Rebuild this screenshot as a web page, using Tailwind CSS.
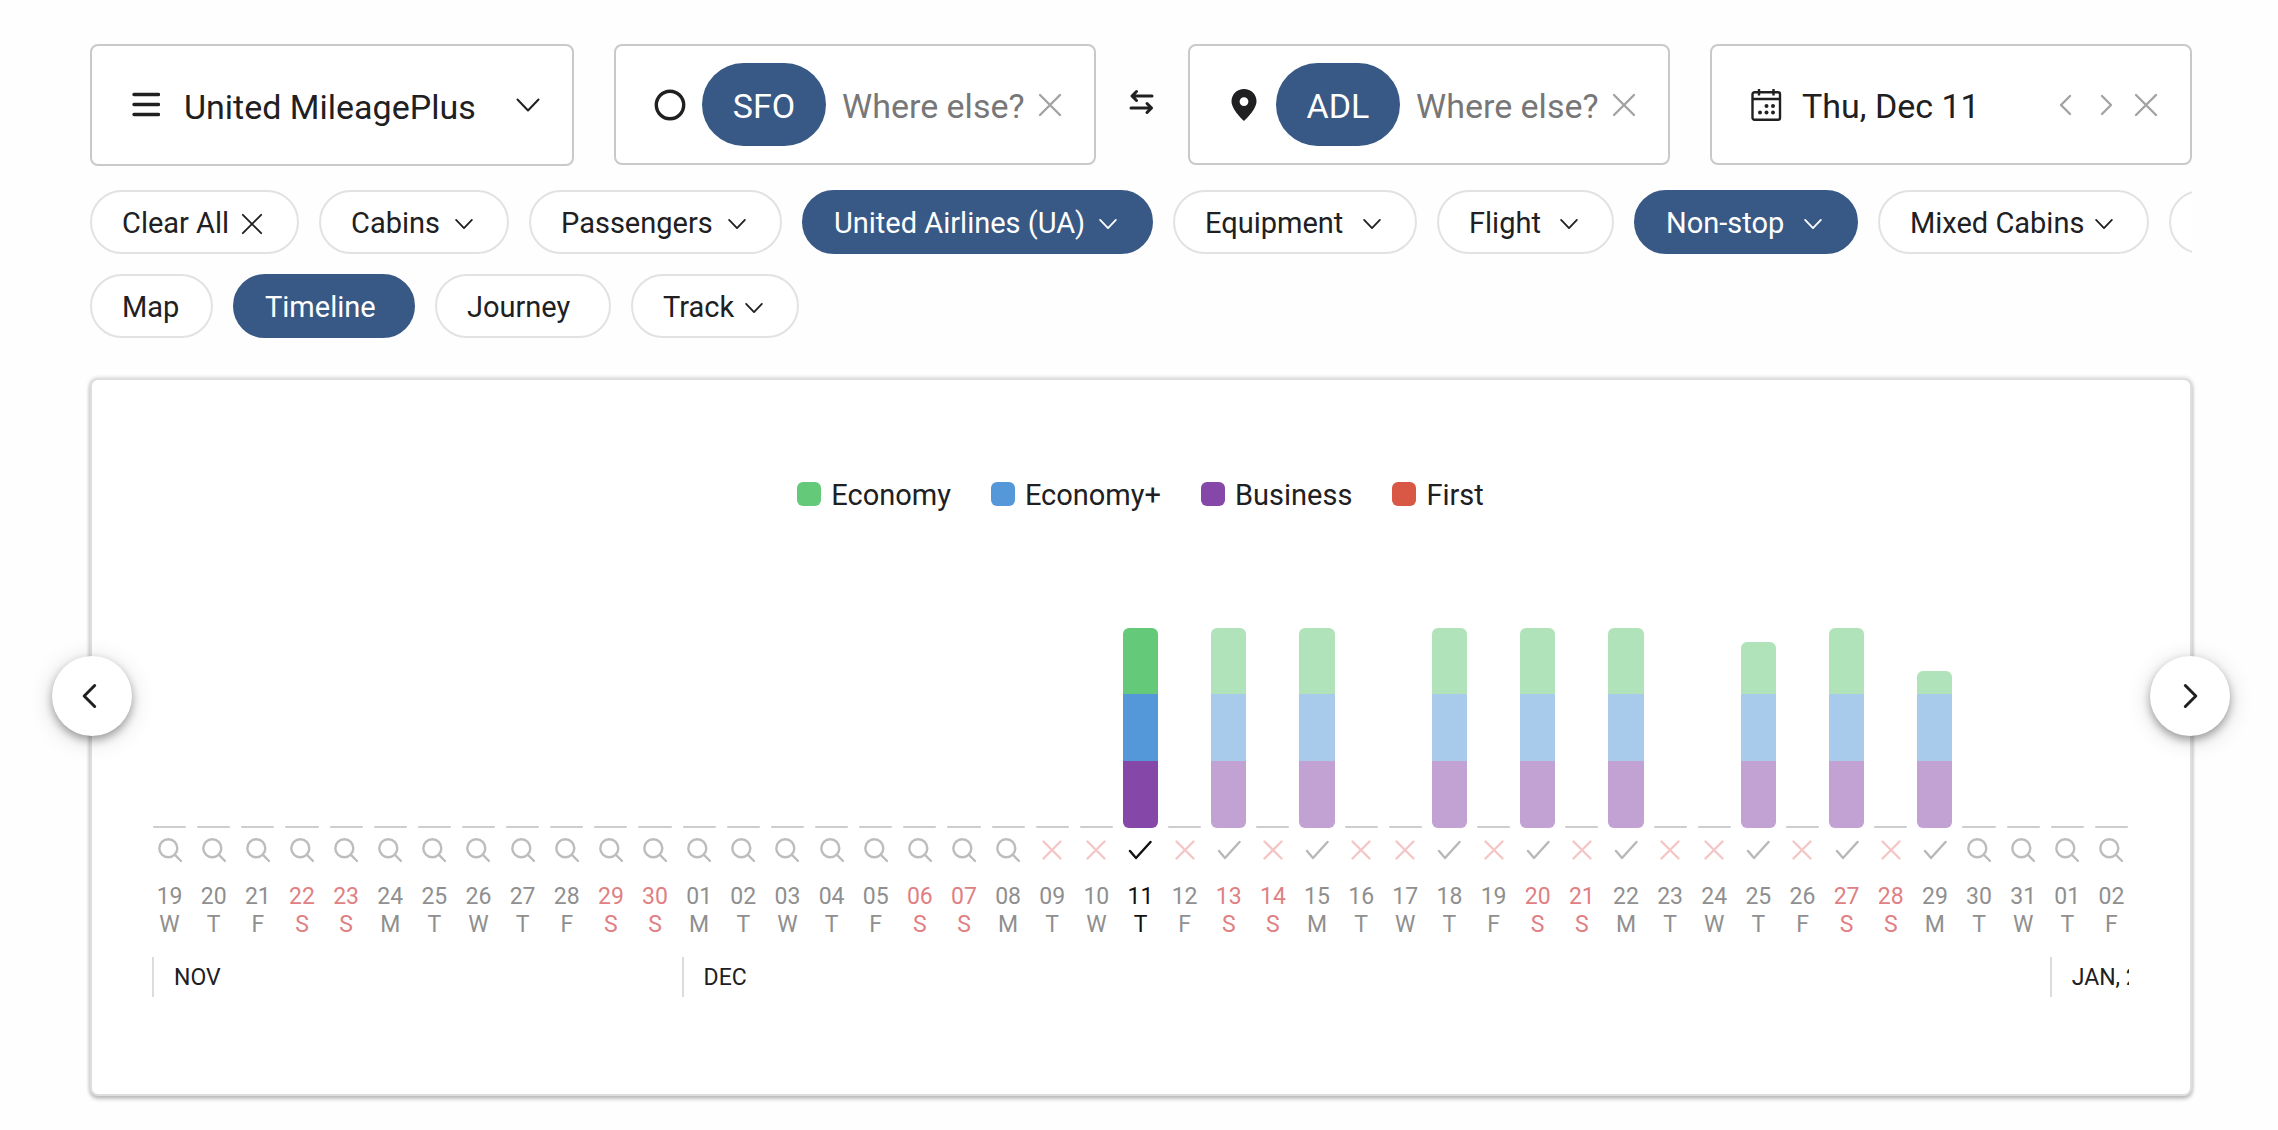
<!DOCTYPE html>
<html lang="en">
<head>
<meta charset="utf-8">
<meta name="viewport" content="width=device-width, initial-scale=1">
<title>Award timeline</title>
<script src="https://cdn.jsdelivr.net/npm/@tailwindcss/browser@4"></script>
</head>
<body class="bg-[#fefefe] font-[Roboto,sans-serif] text-[#202022]">
<svg class="hidden" aria-hidden="true" fill="none" stroke="currentColor">
  <symbol id="chevron-down" viewBox="0 0 24 24" fill="none" stroke="currentColor" stroke-linecap="round" stroke-linejoin="round"><path d="M1.500 6.500L12 17.500l10.500-11"/></symbol>
  <symbol id="chevron-left" viewBox="0 0 24 24" fill="none" stroke="currentColor" stroke-linecap="round" stroke-linejoin="round"><path d="M16 3L7 12l9 9"/></symbol>
  <symbol id="chevron-right" viewBox="0 0 24 24" fill="none" stroke="currentColor" stroke-linecap="round" stroke-linejoin="round"><path d="M8 3l9 9-9 9"/></symbol>
  <symbol id="cross" viewBox="0 0 24 24" fill="none" stroke="currentColor" stroke-linecap="round"><path d="M2 2l20 20M22 2L2 22"/></symbol>
  <symbol id="day-cross" viewBox="0 0 24 24" fill="none" stroke="currentColor" stroke-linecap="round"><path d="M3.500 3.500l17 17M20.500 3.500l-17 17"/></symbol>
  <symbol id="day-check" viewBox="0 0 24 24" fill="none" stroke="currentColor" stroke-linecap="round" stroke-linejoin="round"><path d="M2 13l6 7L22.500 4"/></symbol>
  <symbol id="day-search" viewBox="0 0 24 24" fill="none" stroke="currentColor" stroke-linecap="round"><circle cx="10.300" cy="10.300" r="9"/><path d="M16.700 16.700l6.300 6.300"/></symbol>
</svg>

<main class="flex flex-col overflow-x-clip pt-11 pr-[86px] pb-8 pl-[90px]">
  <form class="flex items-start gap-10">
    <button type="button" class="flex h-[122px] min-w-0 flex-1 items-center rounded-lg border-2 border-[#c9c9c9] bg-white pr-8 pl-10 text-left text-[34px]">
      <svg class="h-7 w-7 shrink-0" viewBox="0 0 28 28" fill="none" stroke="currentColor" stroke-width="3.400" stroke-linecap="round"><path d="M2 3.500h24.500M2 13.500h24.500M2 23.500h24.500"/></svg>
      <span class="ml-6 grow pt-1 whitespace-nowrap">United MileagePlus</span>
      <svg class="h-6 w-6 shrink-0" stroke-width="2"><use href="#chevron-down"/></svg>
    </button>

    <div class="flex h-[121px] min-w-0 flex-1 items-center rounded-lg border-2 border-[#c9c9c9] bg-white pr-8 pl-[38px] text-[34px]">
      <svg class="h-8 w-8 shrink-0" viewBox="0 0 32 32"><circle cx="16" cy="16" r="13.700" fill="none" stroke="currentColor" stroke-width="3.400"/></svg>
      <span class="ml-4 flex h-[83px] w-31 shrink-0 items-center justify-center rounded-full bg-[#385985] pt-1 text-white">SFO</span>
      <input type="text" aria-label="Origin" placeholder="Where else?" class="ml-4 min-w-0 grow bg-transparent pt-1 outline-none placeholder:text-[#777]">
      <button type="button" aria-label="Clear origin" class="shrink-0 text-[#a3a3a3]"><svg class="h-6 w-6" stroke-width="2.400"><use href="#cross"/></svg></button>
    </div>

    <button type="button" aria-label="Swap origin and destination" class="-mx-8 flex h-[115px] w-19 shrink-0 items-center justify-center">
      <svg class="h-7 w-7" viewBox="0 0 28 28" fill="none" stroke="currentColor" stroke-width="3" stroke-linecap="round" stroke-linejoin="round"><path d="M24 8H4M8.500 3.500L4 8l4.500 4.500M3 20h20.500M19 15.500l4.500 4.500-4.500 4.500"/></svg>
    </button>

    <div class="flex h-[121px] min-w-0 flex-1 items-center rounded-lg border-2 border-[#c9c9c9] bg-white pr-8 pl-[38px] text-[34px]">
      <svg class="h-8 w-8 shrink-0" viewBox="0 0 32 32" fill="currentColor"><path fill-rule="evenodd" d="M16 0C9 0 3.500 5.400 3.500 12.300 3.500 21 16 32 16 32s12.500-11 12.500-19.700C28.500 5.400 23 0 16 0zm0 8.200a4.400 4.400 0 1 1 0 8.800 4.400 4.400 0 0 1 0-8.800z"/></svg>
      <span class="ml-4 flex h-[83px] w-31 shrink-0 items-center justify-center rounded-full bg-[#385985] pt-1 text-white">ADL</span>
      <input type="text" aria-label="Destination" placeholder="Where else?" class="ml-4 min-w-0 grow bg-transparent pt-1 outline-none placeholder:text-[#777]">
      <button type="button" aria-label="Clear destination" class="shrink-0 text-[#a3a3a3]"><svg class="h-6 w-6" stroke-width="2.400"><use href="#cross"/></svg></button>
    </div>

    <div class="flex h-[121px] min-w-0 flex-1 items-center rounded-lg border-2 border-[#c9c9c9] bg-white pr-8 pl-[38px] text-[34px]">
      <svg class="h-8 w-8 shrink-0" viewBox="0 0 32 32" fill="none" stroke="currentColor" stroke-width="2.400"><rect x="2.500" y="3.200" width="27.500" height="27.500" rx="2"/><path d="M3 10h27M9 0v6.500M23.500 0v6.500"/><g fill="currentColor" stroke="none"><circle cx="16.500" cy="17" r="2"/><circle cx="23" cy="17" r="2"/><circle cx="10" cy="23.500" r="2"/><circle cx="16.500" cy="23.500" r="2"/><circle cx="23" cy="23.500" r="2"/></g></svg>
      <button type="button" class="ml-5 grow pt-1 text-left whitespace-nowrap">Thu, Dec 11</button>
      <div class="flex shrink-0 items-center gap-4 text-[#a3a3a3]">
        <button type="button" aria-label="Previous day"><svg class="h-6 w-6" stroke-width="2.400"><use href="#chevron-left"/></svg></button>
        <button type="button" aria-label="Next day"><svg class="h-6 w-6" stroke-width="2.400"><use href="#chevron-right"/></svg></button>
        <button type="button" aria-label="Clear date"><svg class="h-6 w-6" stroke-width="2.400"><use href="#cross"/></svg></button>
      </div>
    </div>
  </form>

  <div class="mt-6 flex gap-5 overflow-hidden text-[29px] whitespace-nowrap">
    <button type="button" class="flex h-16 w-[209px] shrink-0 items-center justify-between rounded-full border-2 border-[#e2e2e2] bg-white pt-[3px] pr-[34px] pl-[30px]">Clear All <svg class="h-[22px] w-[22px]" stroke-width="2"><use href="#cross"/></svg></button>
    <button type="button" class="flex h-16 w-[190px] shrink-0 items-center justify-between rounded-full border-2 border-[#e2e2e2] bg-white pt-[3px] pr-[34px] pl-[30px]">Cabins <svg class="h-[18px] w-[18px]" stroke-width="2.400"><use href="#chevron-down"/></svg></button>
    <button type="button" class="flex h-16 w-[253px] shrink-0 items-center justify-between rounded-full border-2 border-[#e2e2e2] bg-white pt-[3px] pr-[34px] pl-[30px]">Passengers <svg class="h-[18px] w-[18px]" stroke-width="2.400"><use href="#chevron-down"/></svg></button>
    <button type="button" class="flex h-16 w-[351px] shrink-0 items-center justify-between rounded-full border-2 border-[#385985] bg-[#385985] pt-[3px] pr-[34px] pl-[30px] text-white">United Airlines (UA) <svg class="h-[18px] w-[18px]" stroke-width="2.400"><use href="#chevron-down"/></svg></button>
    <button type="button" class="flex h-16 w-[244px] shrink-0 items-center justify-between rounded-full border-2 border-[#e2e2e2] bg-white pt-[3px] pr-[34px] pl-[30px]">Equipment <svg class="h-[18px] w-[18px]" stroke-width="2.400"><use href="#chevron-down"/></svg></button>
    <button type="button" class="flex h-16 w-[177px] shrink-0 items-center justify-between rounded-full border-2 border-[#e2e2e2] bg-white pt-[3px] pr-[34px] pl-[30px]">Flight <svg class="h-[18px] w-[18px]" stroke-width="2.400"><use href="#chevron-down"/></svg></button>
    <button type="button" class="flex h-16 w-[224px] shrink-0 items-center justify-between rounded-full border-2 border-[#385985] bg-[#385985] pt-[3px] pr-[34px] pl-[30px] text-white">Non-stop <svg class="h-[18px] w-[18px]" stroke-width="2.400"><use href="#chevron-down"/></svg></button>
    <button type="button" class="flex h-16 w-[271px] shrink-0 items-center justify-between rounded-full border-2 border-[#e2e2e2] bg-white pt-[3px] pr-[34px] pl-[30px]">Mixed Cabins <svg class="h-[18px] w-[18px]" stroke-width="2.400"><use href="#chevron-down"/></svg></button>
    <button type="button" aria-label="More filters" class="h-16 w-[200px] shrink-0 rounded-full border-2 border-[#e2e2e2] bg-white"></button>
  </div>

  <div class="mt-5 flex gap-5 text-[29px] whitespace-nowrap">
    <button type="button" class="flex h-16 w-[123px] items-center rounded-full border-2 border-[#e2e2e2] bg-white pt-[3px] pl-[30px]">Map</button>
    <button type="button" class="flex h-16 w-[182px] items-center rounded-full border-2 border-[#385985] bg-[#385985] pt-[3px] pl-[30px] text-white">Timeline</button>
    <button type="button" class="flex h-16 w-[176px] items-center rounded-full border-2 border-[#e2e2e2] bg-white pt-[3px] pl-[30px]">Journey</button>
    <button type="button" class="flex h-16 w-[168px] items-center justify-between rounded-full border-2 border-[#e2e2e2] bg-white pt-[3px] pr-[34px] pl-[30px]">Track <svg class="h-[18px] w-[18px]" stroke-width="2.400"><use href="#chevron-down"/></svg></button>
  </div>

  <section class="relative mt-10 rounded-lg border-2 border-[#dedede] bg-white pt-[97px] pr-[61px] pb-[97px] pl-[60px] shadow-[0_0_3px_2px_rgba(0,0,0,0.08),0_3px_4px_rgba(0,0,0,0.22)]">
    <ul class="flex h-[34px] items-center justify-center gap-10 text-[29px]">
      <li class="flex items-center gap-2.5"><span class="h-6 w-6 rounded-md bg-[#65c97a]"></span><span class="pt-[3px]">Economy</span></li>
      <li class="flex items-center gap-2.5"><span class="h-6 w-6 rounded-md bg-[#5498d9]"></span><span class="pt-[3px]">Economy+</span></li>
      <li class="flex items-center gap-2.5"><span class="h-6 w-6 rounded-md bg-[#8548a8]"></span><span class="pt-[3px]">Business</span></li>
      <li class="flex items-center gap-2.5"><span class="h-6 w-6 rounded-md bg-[#d95745]"></span><span class="pt-[3px]">First</span></li>
    </ul>

    <ol id="days" class="mt-[117px] grid grid-cols-[repeat(45,minmax(0,1fr))] gap-x-[9px]"></ol>

    <div class="mt-[18px] grid grid-cols-[repeat(45,minmax(0,1fr))] gap-x-[9px] text-[23px] whitespace-nowrap">
      <div class="col-span-12 flex h-10 items-center border-l-2 border-[#dcdcdc] pt-[3px] pl-5">NOV</div>
      <div class="col-span-31 flex h-10 items-center border-l-2 border-[#dcdcdc] pt-[3px] pl-5">DEC</div>
      <div class="col-span-2 flex h-10 items-center overflow-hidden border-l-2 border-[#dcdcdc] pt-[3px] pl-5">JAN, 26</div>
    </div>

    <button type="button" aria-label="Earlier dates" class="absolute top-[276px] -left-10 flex h-20 w-20 items-center justify-center rounded-full bg-white pr-1 shadow-[0_4px_8px_rgba(0,0,0,0.32),0_4px_24px_rgba(0,0,0,0.16)]"><svg class="h-7 w-7" stroke-width="2.600"><use href="#chevron-left"/></svg></button>
    <button type="button" aria-label="Later dates" class="absolute top-[276px] -right-10 flex h-20 w-20 items-center justify-center rounded-full bg-white shadow-[0_4px_8px_rgba(0,0,0,0.32),0_4px_24px_rgba(0,0,0,0.16)]"><svg class="h-7 w-7" stroke-width="2.600"><use href="#chevron-right"/></svg></button>
  </section>
</main>

<script>
  // Economy bar height per date with seats; other December dates from the 9th to the 28th are sold out.
  const seats = { '12-11': 66, '12-13': 66, '12-15': 66, '12-18': 66, '12-20': 66, '12-22': 66, '12-25': 52, '12-27': 66, '12-29': 23 };
  const selected = '12-11';
  const rows = [];
  for (let i = 0; i < 45; i++) {
    const d = new Date(Date.UTC(2025, 10, 19 + i));
    const day = String(d.getUTCDate()).padStart(2, '0');
    const key = (d.getUTCMonth() + 1) + '-' + day;
    const weekday = d.getUTCDay();
    const active = key === selected;
    const soldOut = !seats[key] && d.getUTCMonth() === 11 && +day >= 9 && +day <= 28;
    const tone = active ? 'text-[#111]' : weekday === 0 || weekday === 6 ? 'text-[#e08083]' : 'text-[#8f8f8f]';
    const bar = seats[key]
      ? `<span class="flex flex-col overflow-hidden rounded-md ${active ? '' : 'opacity-50'}"><span class="bg-[#65c97a]" style="height:${seats[key]}px"></span><span class="h-[67px] bg-[#5498d9]"></span><span class="h-[67px] bg-[#8548a8]"></span></span>`
      : '<span class="mx-px h-0.5 rounded-sm bg-[#cdcdcd]"></span>';
    const icon = seats[key]
      ? `<svg class="h-6 w-6 ${active ? 'text-[#111]' : 'text-[#b8b8ba]'}" stroke-width="2.400"><use href="#day-check"/></svg>`
      : soldOut
        ? '<svg class="h-6 w-6 text-[#f4c6c6]" stroke-width="2.400"><use href="#day-cross"/></svg>'
        : '<svg class="h-6 w-6 text-[#bdbdbd]" stroke-width="2.400"><use href="#day-search"/></svg>';
    rows.push(`<li><button type="button" class="flex w-full flex-col items-center">
      <span class="flex h-[200px] w-full flex-col justify-end">${bar}</span>
      <span class="mt-2.5">${icon}</span>
      <span class="mt-5 flex flex-col pt-px text-[23px] leading-7 ${tone}"><span>${day}</span><span>${'SMTWTFS'[weekday]}</span></span>
    </button></li>`);
  }
  document.getElementById('days').innerHTML = rows.join('');
</script>
</body>
</html>
